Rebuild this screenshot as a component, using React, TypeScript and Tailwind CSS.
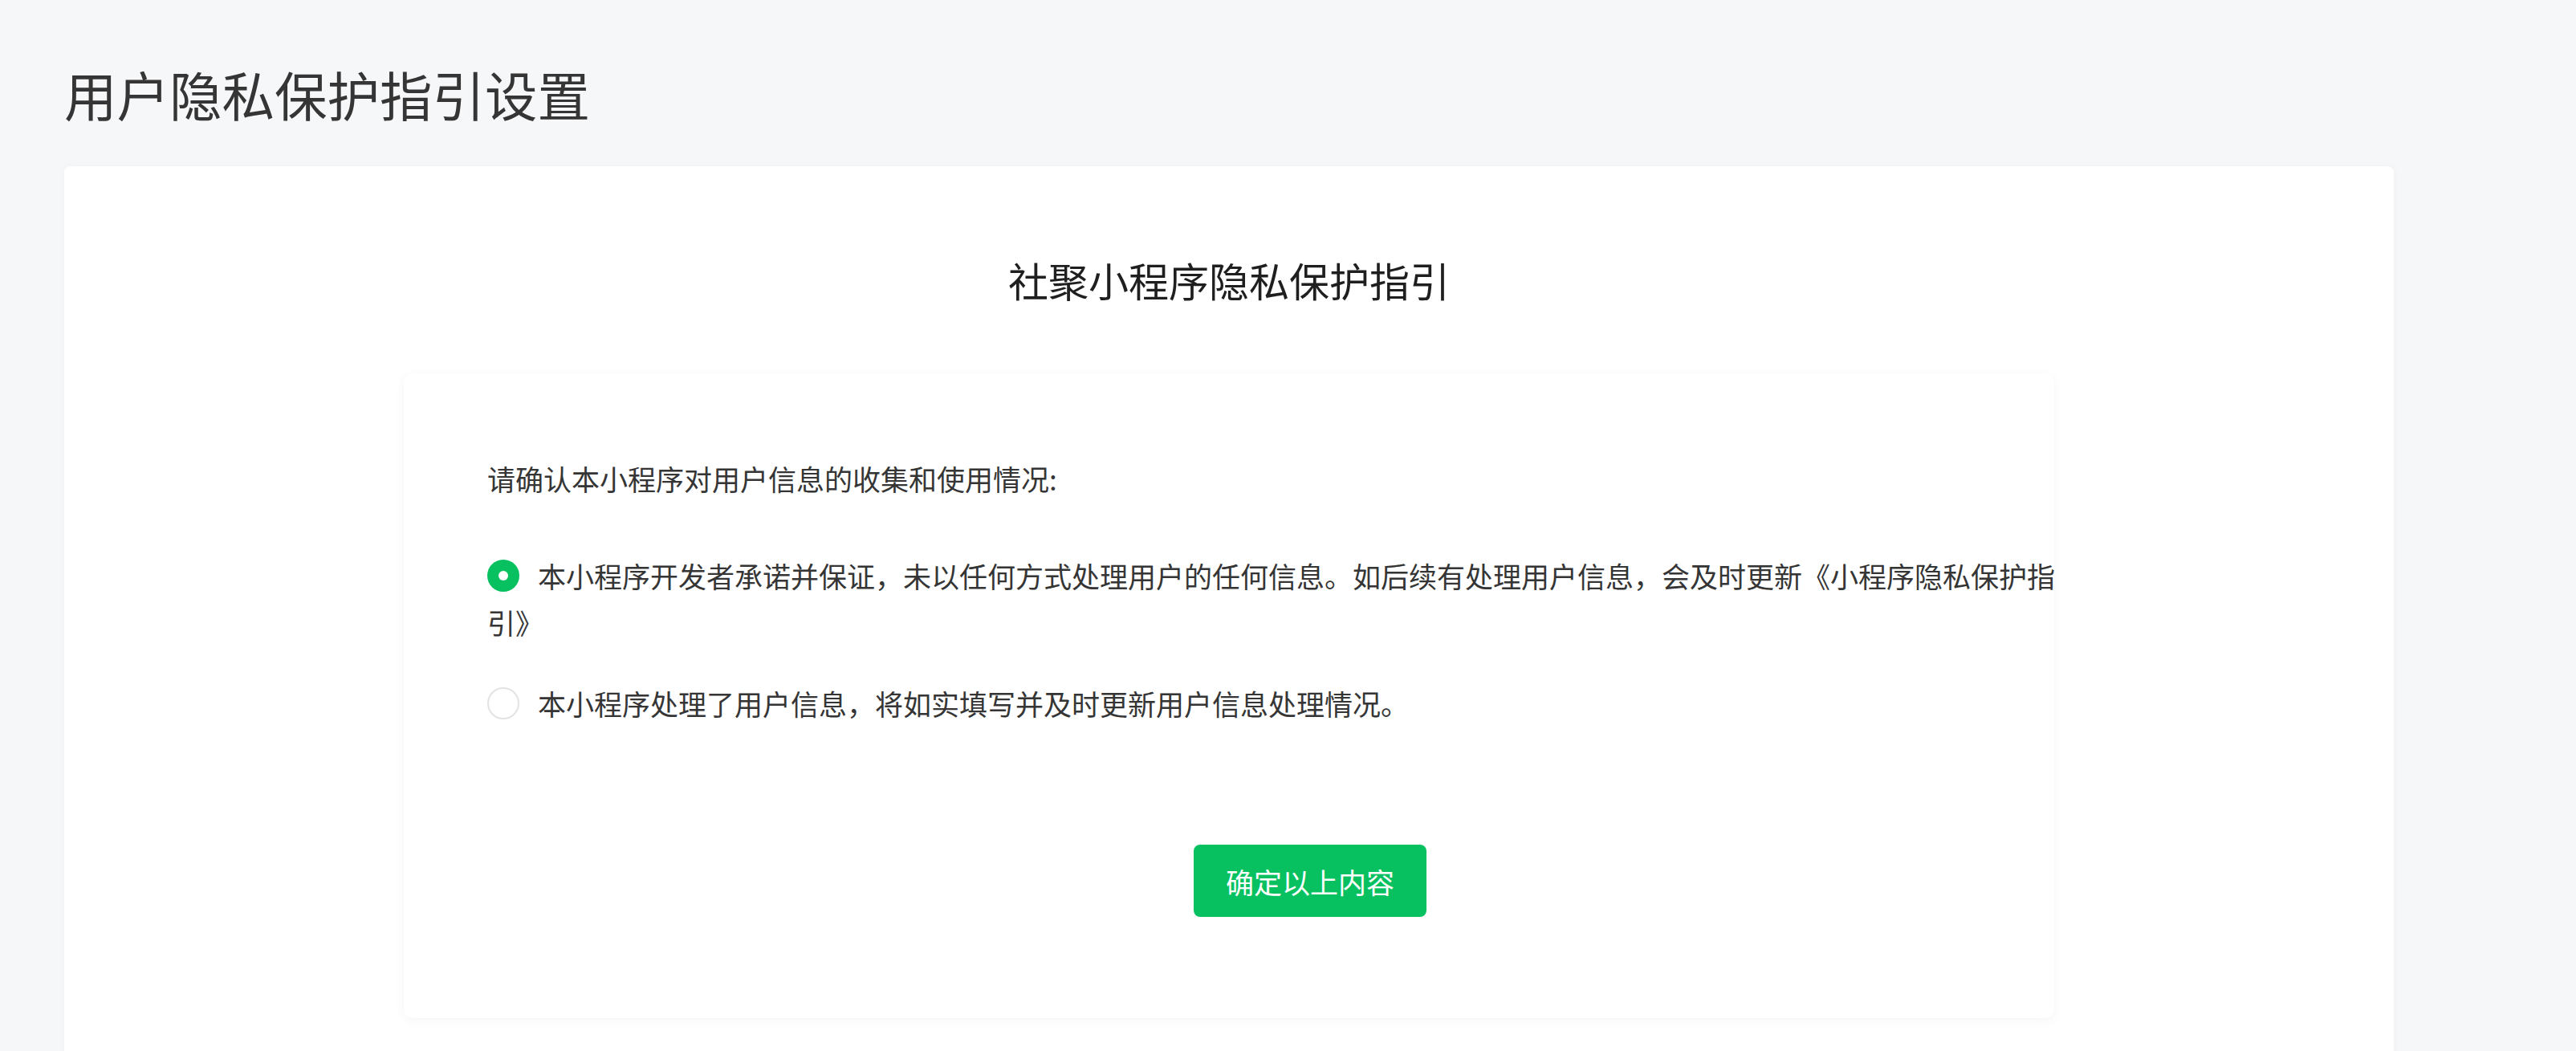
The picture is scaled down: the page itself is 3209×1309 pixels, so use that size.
import React, { useState } from "react";

const options = [
  "本小程序开发者承诺并保证，未以任何方式处理用户的任何信息。如后续有处理用户信息，会及时更新《小程序隐私保护指引》",
  "本小程序处理了用户信息，将如实填写并及时更新用户信息处理情况。",
];

export default function App() {
  const [selected, setSelected] = useState(0);

  return (
    <div
      className="min-h-screen bg-[#f6f7f9] pl-[80px] pr-[227px] pt-[72px]"
      style={{ fontFamily: '"Noto Sans CJK SC", "Noto Sans", sans-serif' }}
    >
      {/* Page title */}
      <h1 className="text-[65.5px] leading-[90px] font-normal text-[#353535]">
        用户隐私保护指引设置
      </h1>

      {/* Main card */}
      <div className="mt-[45px] bg-white rounded-lg shadow-[0_0_10px_rgba(0,0,0,0.03)] pt-[106px] pb-[120px]">
        <h2 className="text-center text-[50px] leading-[70px] font-normal text-[#1f1f1f]">
          社聚小程序隐私保护指引
        </h2>

        {/* Inner form card */}
        <div className="mx-auto mt-[82px] w-[2056px] bg-white rounded-xl shadow-[0_3px_14px_rgba(0,0,0,0.045)] pl-[104px] pr-[2px] pt-[102px] pb-[126px]">
          <p className="text-[35px] leading-[58px] text-[#353535]">
            请确认本小程序对用户信息的收集和使用情况:
          </p>

          <div className="mt-[63px] -mr-[30px] flex flex-col gap-[43px]">
            {options.map((text, i) => (
              <label
                key={i}
                onClick={() => setSelected(i)}
                className="block cursor-pointer text-[35px] leading-[58px] text-[#353535]"
              >
                {selected === i ? (
                  <span className="relative -top-[6px] inline-flex align-middle mr-[23px] w-[40px] h-[40px] rounded-full bg-[#07c160] items-center justify-center">
                    <span className="w-[12px] h-[12px] rounded-full bg-white" />
                  </span>
                ) : (
                  <span className="relative -top-[6px] inline-block align-middle mr-[23px] w-[40px] h-[40px] rounded-full border-2 border-[#e3e3e3] bg-white" />
                )}
                {text}
              </label>
            ))}
          </div>

          <div className="mt-[147px] flex justify-center pl-[100px]">
            <button className="w-[290px] h-[90px] rounded-lg bg-[#07c160] text-white text-[35px] leading-none">
              确定以上内容
            </button>
          </div>
        </div>
      </div>
    </div>
  );
}
